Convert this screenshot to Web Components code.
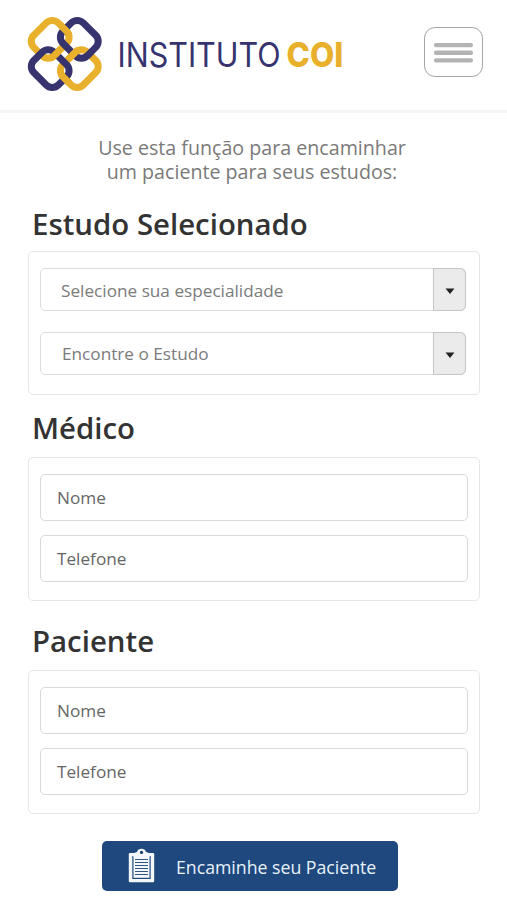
<!DOCTYPE html>
<html lang="pt-BR">
<head>
<meta charset="utf-8">
<title>Instituto COI</title>
<style>
html,body{margin:0;background:#fff}
body{width:507px;height:900px;overflow:hidden;font-family:"Open Sans","Noto Sans",sans-serif}
</style>
</head>
<body>
<coi-page></coi-page>
<script>
const define = (name, html) => customElements.define(name, class extends HTMLElement {
  constructor() {
    super();
    this.attachShadow({mode: 'open'}).innerHTML = html;
  }
});

define('coi-logo', `
<style>:host{display:block;width:330px;height:90px}svg{display:block}
.r{fill:none;stroke-width:7}.y{stroke:#e8b02b}.n{stroke:#36336f}
text{font-family:Inter,sans-serif}</style>
<svg width="330" height="90" viewBox="0 0 330 90">
<defs>
<rect id="ry" x="-17.3" y="-14.400" width="34.600" height="28.800" rx="8.500" transform="rotate(-45)"/>
<rect id="rn" x="-17.3" y="-14.400" width="34.600" height="28.800" rx="8.500" transform="rotate(45)"/>
<clipPath id="a"><rect x="38" y="12" width="14" height="15"/><rect x="29" y="37" width="12" height="14"/></clipPath>
<clipPath id="b"><rect x="48.500" y="37" width="12" height="14"/><rect x="38" y="61" width="14" height="15"/></clipPath>
</defs>
<use href="#ry" class="r y" transform="translate(30.2 29.3)"/>
<use href="#ry" class="r y" transform="translate(59.3 58.6)"/>
<use href="#rn" class="r n" transform="translate(59.3 29.3)"/>
<use href="#rn" class="r n" transform="translate(30.2 58.6)"/>
<g clip-path="url(#a)"><use href="#ry" class="r y" transform="translate(30.2 29.3)"/></g>
<g clip-path="url(#b)"><use href="#ry" class="r y" transform="translate(59.3 58.6)"/></g>
<text transform="translate(97.500 56.500) scale(.9 1)" font-size="34" font-weight="400" fill="#36336f" textLength="181.200" lengthAdjust="spacingAndGlyphs">INSTITUTO</text>
<text transform="translate(266.500 56.800) scale(.9 1)" font-size="34.500" font-weight="800" fill="#e8b02b" textLength="63" lengthAdjust="spacingAndGlyphs">COI</text>
</svg>`);

define('coi-menu-button', `
<style>:host{display:flex;flex-direction:column;justify-content:center;align-items:center;box-sizing:border-box;width:59px;height:50px;padding-top:2px;border:1px solid #a6a6a6;border-radius:11px}
</style><svg width="39" height="20" viewBox="0 0 39 20" fill="#b3b3b3"><rect width="39" height="4.300" rx="2"/><rect y="7.600" width="39" height="4.300" rx="2"/><rect y="15.200" width="39" height="4.300" rx="2"/></svg>`);

define('coi-header', `
<style>:host{display:flex;justify-content:space-between;align-items:flex-start;box-sizing:border-box;height:113px;padding:10px 24px 0 20px;border-bottom:3px solid #f5f5f5}
coi-menu-button{margin-top:17px}</style>
<coi-logo></coi-logo><coi-menu-button></coi-menu-button>`);

define('coi-section', `
<style>:host{display:block;margin:0 27px 0 28px}
h2{margin:0;padding-left:4px;height:53px;line-height:var(--lh,48px);font-size:29.400px;font-weight:600;color:#333;white-space:nowrap}
.card{box-sizing:border-box;height:144px;border:1px solid #e6e6e6;border-radius:5px;padding:16px 11px;display:flex;flex-direction:column;gap:var(--gap,14.400px)}
</style><h2><slot name="title"></slot></h2><div class="card"><slot></slot></div>`);

define('coi-field', `
<style>:host{display:flex;align-items:center;box-sizing:border-box;height:47px;border:1px solid #d9d9d9;border-radius:5px;padding-left:16px;font-size:17.200px;color:#666;white-space:nowrap}
</style><span><slot></slot></span>`);

define('coi-select', `
<style>:host{display:flex;box-sizing:border-box;height:42.500px;margin-right:2px;border:1px solid #dcdcdc;border-radius:5px;padding-left:var(--indent,20px);font-size:17.200px;color:#7b7b7b;line-height:var(--lh,43px);white-space:nowrap}
span{flex:1}
b{width:31px;margin:-1px;border:1px solid #c6c6c6;border-radius:0 6px 6px 0;background:#ebebeb;display:flex;align-items:center;justify-content:center}
svg{margin-top:2.500px}
</style><span><slot></slot></span><b><svg width="10" height="6"><path d="M.5 .5h9L5 6z" fill="#222"/></svg></b>`);

define('coi-button', `
<style>:host{display:flex;align-items:center;box-sizing:border-box;width:296px;height:50px;padding-left:26px;border-radius:5px;background:#1f497e;color:#e9f2fc;font-size:17.700px;white-space:nowrap}
svg{flex:none;margin-right:21px}span{padding-top:2px}</style>
<svg width="27" height="36" viewBox="0 0 27 36">
<path d="M.8 6.3Q.8 5 2 5H25Q26.200 5 26.200 6.300V33Q26.200 34.200 25 34.200H2Q.8 34.200.8 33Z" fill="#f4f8fc"/>
<path d="M4.300 8H22.700V31H4.300Z" fill="#1f497e"/><path d="M5.500 8H21.500V29.800H5.500Z" fill="#f4f8fc"/>
<path d="M5.500 9V6Q6 4.500 9 4Q10 .8 13.500 .8T18 4Q21 4.500 21.500 6V9Z" fill="#f4f8fc"/><circle cx="13.500" cy="4.400" r="1.600" fill="#183d6b"/>
<path d="M7 11.500h13M7 14.500h13M7 17.500h13M7 20.500h13M7 23.500h13M7 26.500h13" stroke="#32577f" stroke-width="1.200"/>
</svg><span><slot></slot></span>`);

define('coi-page', `
<style>:host{display:block;width:507px}
p{margin:23px 0 15px;padding-right:3px;text-align:center;font-size:19.650px;line-height:23.500px;color:#7a7a7a;white-space:nowrap}
.s1{--gap:21.500px;--lh:53px}.s1 coi-select{--lh:43.500px}.s1 coi-select+coi-select{--lh:41.500px;--indent:21px}
.s2{margin-top:9px}.s3{margin-top:16px}
coi-button{margin:27px 0 0 102px}
</style>
<coi-header></coi-header>
<p>Use esta função para encaminhar<br>um paciente para seus estudos:</p>
<coi-section class="s1"><span slot="title">Estudo Selecionado</span>
<coi-select>Selecione sua especialidade</coi-select><coi-select>Encontre o Estudo</coi-select></coi-section>
<coi-section class="s2"><span slot="title">Médico</span><coi-field>Nome</coi-field><coi-field>Telefone</coi-field></coi-section>
<coi-section class="s3"><span slot="title">Paciente</span><coi-field>Nome</coi-field><coi-field>Telefone</coi-field></coi-section>
<coi-button>Encaminhe seu Paciente</coi-button>`);
</script>
</body>
</html>
